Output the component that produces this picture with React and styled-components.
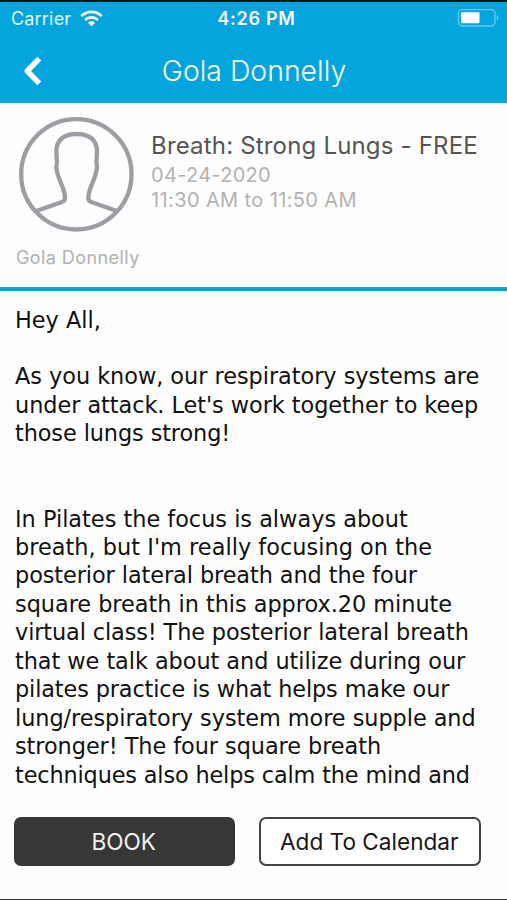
import React from "react";
import styled, { createGlobalStyle } from "styled-components";

const GlobalStyle = createGlobalStyle`
  *, *::before, *::after { box-sizing: border-box; }
  body { margin: 0; background: #fff; }
`;

const BLUE = "#04a4dc";

const Screen = styled.div`
  display: flex;
  flex-direction: column;
  width: 507px;
  height: 900px;
  overflow: hidden;
  background: #fefefe;
  border-bottom: 1px solid #3c3c3c;
  font-family: Inter, "Liberation Sans", sans-serif;
`;

const Header = styled.header`
  flex: none;
  height: 102.5px;
  border-top: 2px solid #03141d;
  background: ${BLUE};
  color: #fff;
`;

const StatusBar = styled.div`
  display: grid;
  grid-template-columns: 1fr auto 1fr;
  align-items: center;
  height: 33px;
  margin-bottom: 3px;
  padding: 0 8px 0 11px;
  font-size: 18px;
`;

const Carrier = styled.div`
  display: flex;
  align-items: center;
  gap: 9px;
  letter-spacing: 0.18px;
  color: #e4f8ff;
`;

const Clock = styled.div`
  padding-left: 3px;
  font-weight: 600;
  letter-spacing: 0.75px;
`;

const Battery = styled.svg`
  justify-self: end;
`;

const NavBar = styled.nav`
  display: grid;
  grid-template-columns: 70px 1fr 70px;
  align-items: center;
  height: 64px;
`;

const BackButton = styled.button`
  display: flex;
  align-items: center;
  height: 100%;
  margin: 0;
  padding: 2px 0 0 22px;
  border: 0;
  background: none;
  color: #fff;
`;

const Title = styled.h1`
  margin: 0;
  padding: 1px 0 0 1px;
  text-align: center;
  font-size: 28.4px;
  font-weight: 300;
  line-height: 34px;
`;

const Summary = styled.section`
  flex: none;
  display: grid;
  grid-template-columns: 135px 1fr;
  grid-template-rows: 130px 1fr;
  height: 188.5px;
  padding: 13.5px 0 0 16px;
  border-bottom: 4.5px solid ${BLUE};
`;

const Avatar = styled.svg`
  display: block;
  margin-left: 2px;
`;

const Details = styled.div`
  padding-top: 14px;
`;

const ClassName = styled.h2`
  margin: 0 0 1.5px;
  font-size: 24px;
  font-weight: 400;
  line-height: 31px;
  letter-spacing: 0.18px;
  color: #555;
`;

const Meta = styled.p`
  margin: 0;
  font-size: 20px;
  font-weight: 400;
  line-height: 25.5px;
  letter-spacing: ${(p) => p.$tracking}px;
  color: #b2b2b2;
`;

const Instructor = styled.p`
  grid-column: 1 / -1;
  margin: 0;
  font-size: 18px;
  line-height: 24px;
  letter-spacing: 0.42px;
  color: #b0b0b0;
`;

const Description = styled.main`
  flex: none;
  height: 512px;
  padding: 14.5px 0 0 15px;
  overflow: hidden;
  font-family: "DejaVu Sans", Verdana, sans-serif;
  font-size: 22.4px;
  line-height: 28.44px;
  color: #111;
`;

const Line = styled.div`
  min-height: 28.44px;
  letter-spacing: ${(p) => p.$tracking}px;
  white-space: nowrap;
`;

const Actions = styled.footer`
  display: flex;
  gap: 24px;
  margin-top: 14px;
  padding-left: 13.5px;
`;

const ActionButton = styled.button`
  width: 221.5px;
  height: 49px;
  padding: 0 1px 0 0;
  border: 2px solid ${(p) => (p.$filled ? "#373737" : "#434346")};
  border-radius: 7px;
  background: ${(p) => (p.$filled ? "#373737" : "#fff")};
  color: ${(p) => (p.$filled ? "#f0f0f0" : "#161616")};
  font-family: inherit;
  font-size: 22.6px;
  font-weight: 400;
`;

const lines = [
  ["Hey All,", 0],
  ["", 0],
  ["As you know, our respiratory systems are", -0.03],
  ["under attack. Let's work together to keep", -0.05],
  ["those lungs strong!", -0.1],
  ["", 0],
  ["", 0],
  ["In Pilates the focus is always about", 0],
  ["breath, but I'm really focusing on the", 0.03],
  ["posterior lateral breath and the four", -0.08],
  ["square breath in this approx.20 minute", -0.03],
  ["virtual class! The posterior lateral breath", -0.12],
  ["that we talk about and utilize during our", -0.05],
  ["pilates practice is what helps make our", -0.13],
  ["lung/respiratory system more supple and", -0.05],
  ["stronger! The four square breath", -0.06],
  ["techniques also helps calm the mind and", -0.15],
];

const WifiIcon = () => (
  <svg width="23" height="17" viewBox="0 0 23 17" fill="none" stroke="#fff" strokeWidth="2.7">
    <path d="M1.3 6.1a14.4 14.4 0 0 1 20.4 0" />
    <path d="M5 10a9.2 9.2 0 0 1 13 0" />
    <path d="M11.5 16.3 8 12.8a5 5 0 0 1 7 0z" fill="#fff" stroke="none" />
  </svg>
);

const BatteryIcon = () => (
  <Battery width="42" height="19" viewBox="0 0 42 19" fill="none">
    <rect x="1.5" y="0.5" width="36.5" height="16.5" rx="4" stroke="#62c9ed" strokeWidth="1.4" />
    <rect x="4" y="3.2" width="18.5" height="11" rx="1" fill="#fff" />
    <path d="M39.8 6c2 .8 2 4.6 0 5.4z" fill="#7bd2f0" />
  </Battery>
);

export default function App() {
  return (
    <>
      <GlobalStyle />
      <Screen>
        <Header>
          <StatusBar>
            <Carrier>
              Carrier
              <WifiIcon />
            </Carrier>
            <Clock>4:26 PM</Clock>
            <BatteryIcon />
          </StatusBar>
          <NavBar>
            <BackButton aria-label="Back">
              <svg width="22" height="30" viewBox="0 0 22 30" fill="none" stroke="#fff" strokeWidth="5.4" strokeLinejoin="round">
                <path d="M17.3 2.7 5.2 15l12.1 12.3" />
              </svg>
            </BackButton>
            <Title>Gola Donnelly</Title>
          </NavBar>
        </Header>
        <Summary>
          <Avatar width="117" height="117" viewBox="24 18 351 351" fill="none" stroke="#9c9ea3" strokeWidth="13">
            <circle cx="199" cy="193" r="165.5" />
            <path d="M79 303 156 276Q165 273 165 264C165 235 144 208 141 183Q137 172 140 163Q142 157 140 145L139 125C139 88 163 72 200 72S261 88 261 125L260 145Q258 157 260 163Q263 172 259 183C256 208 235 235 235 264Q235 273 244 276L320 303" />
          </Avatar>
          <Details>
            <ClassName>Breath: Strong Lungs - FREE</ClassName>
            <Meta $tracking={0.3}>04-24-2020</Meta>
            <Meta $tracking={0.38}>11:30 AM to 11:50 AM</Meta>
          </Details>
          <Instructor>Gola Donnelly</Instructor>
        </Summary>
        <Description>
          {lines.map(([text, tracking], i) => (
            <Line key={i} $tracking={tracking}>
              {text}
            </Line>
          ))}
        </Description>
        <Actions>
          <ActionButton $filled>BOOK</ActionButton>
          <ActionButton>Add To Calendar</ActionButton>
        </Actions>
      </Screen>
    </>
  );
}
